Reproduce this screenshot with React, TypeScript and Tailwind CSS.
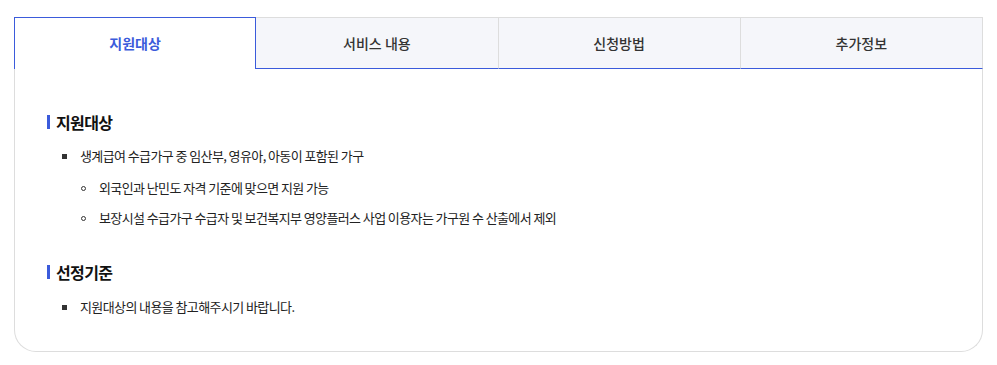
const font = "font-['Noto_Sans_CJK_KR','Noto_Sans',sans-serif]";

const tabs = ["지원대상", "서비스 내용", "신청방법", "추가정보"];

function SectionTitle({ children }: { children: string }) {
  return (
    <h3 className="flex items-center gap-[6px] h-6 text-[16px] leading-6 font-bold tracking-[-0.6px] text-[#111]">
      <span className="w-[3px] h-[14px] bg-[#3b5bdb]" />
      {children}
    </h3>
  );
}

function Bullet({ children }: { children: string }) {
  return (
    <li className="flex items-center h-5 pl-[15px] text-[13px] leading-5 tracking-[-0.6px] text-[#222]">
      <span className="w-[5px] h-[5px] bg-[#333] mr-[13px] shrink-0" />
      {children}
    </li>
  );
}

function SubBullet({ children }: { children: string }) {
  return (
    <li className="flex items-center h-5 pl-[34px] text-[13px] leading-5 tracking-[-0.6px] text-[#222]">
      <span className="w-[5px] h-[5px] rounded-full border border-[#333] mr-[13px] shrink-0" />
      {children}
    </li>
  );
}

export default function App() {
  const active = 0;
  return (
    <div className={`min-h-[365px] bg-white pl-[14px] pt-[17px] ${font}`}>
      <div className="w-[969px]">
        {/* Tabs */}
        <div className="grid grid-cols-4 h-[52px]">
          {tabs.map((t, i) => (
            <button
              key={t}
              className={
                i === active
                  ? "flex items-center justify-center border border-b-0 border-[#3b5bdb] bg-white text-[14px] font-bold text-[#3b5bdb]"
                  : "flex items-center justify-center border-t border-r border-b border-t-[#dddddd] border-r-[#dddddd] border-b-[#3b5bdb] bg-[#f5f6fa] text-[14px] font-medium text-[#333]"
              }
            >
              {t}
            </button>
          ))}
        </div>

        {/* Content */}
        <div className="border border-t-0 border-[#dddddd] rounded-b-[22px] px-8 pt-[41px] pb-[34px]">
          <SectionTitle>지원대상</SectionTitle>
          <ul className="mt-3 flex flex-col">
            <Bullet>생계급여 수급가구 중 임산부, 영유아, 아동이 포함된 가구</Bullet>
            <ul className="mt-3 flex flex-col gap-[10px]">
              <SubBullet>외국인과 난민도 자격 기준에 맞으면 지원 가능</SubBullet>
              <SubBullet>보장시설 수급가구 수급자 및 보건복지부 영양플러스 사업 이용자는 가구원 수 산출에서 제외</SubBullet>
            </ul>
          </ul>

          <div className="mt-8">
            <SectionTitle>선정기준</SectionTitle>
          </div>
          <ul className="mt-[13px] flex flex-col">
            <Bullet>지원대상의 내용을 참고해주시기 바랍니다.</Bullet>
          </ul>
        </div>
      </div>
    </div>
  );
}
